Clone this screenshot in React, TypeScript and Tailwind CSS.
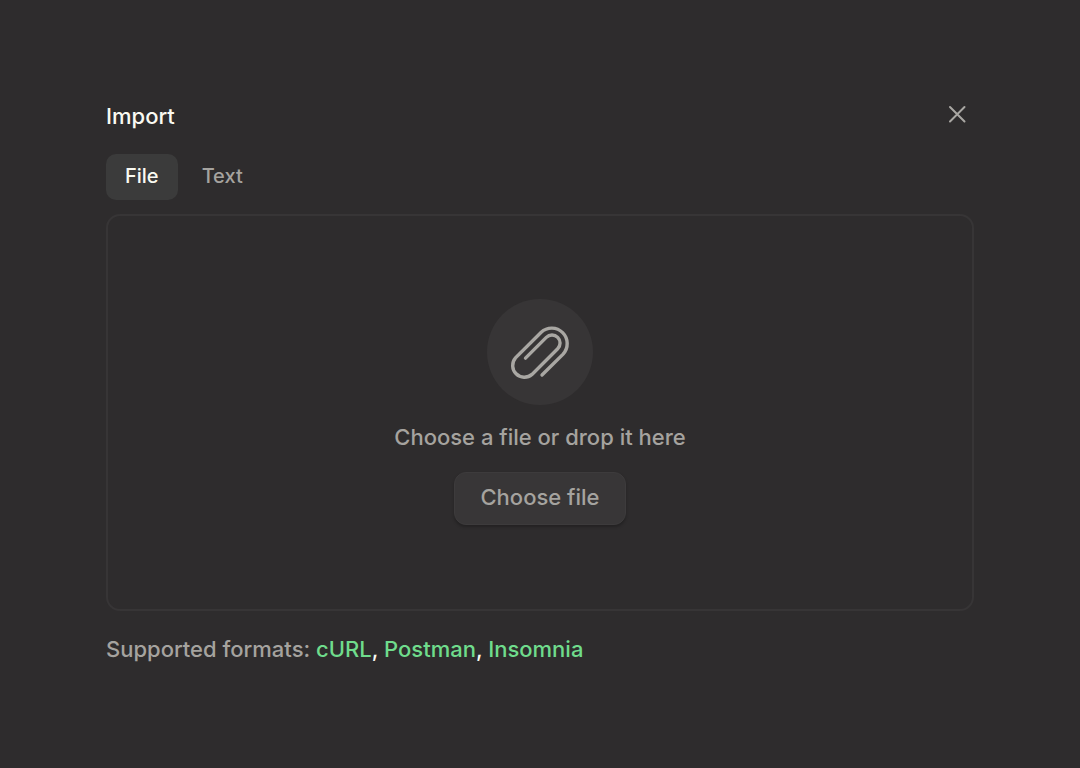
import { useRef, useState } from "react";
import clsx from "clsx";

type Tab = "File" | "Text";

const TABS: Tab[] = ["File", "Text"];
const FORMATS = ["cURL", "Postman", "Insomnia"];

export default function App() {
  const [tab, setTab] = useState<Tab>("File");

  return (
    <main className="min-h-screen bg-[#2e2c2d] px-[106px] pt-[100px] pb-20 font-['Inter',sans-serif] font-medium text-[#a5a39f]">
      <header className="flex h-8 items-start justify-between">
        <h1 className="text-[22px] leading-8 font-medium text-[#fafaf2]">Import</h1>
        <button type="button" aria-label="Close" className="px-2 py-[5px]">
          <CloseIcon />
        </button>
      </header>

      <div role="tablist" className="mt-[22px] flex gap-[5px]">
        {TABS.map((name) => (
          <button
            key={name}
            type="button"
            role="tab"
            aria-selected={tab === name}
            onClick={() => setTab(name)}
            className={clsx(
              "h-[46px] rounded-[10px] px-[19px] pb-[2px] text-[20px]",
              tab === name ? "bg-[#3b3b3b] text-[#fafaf2]" : "text-[#a5a39f]"
            )}
          >
            {name}
          </button>
        ))}
      </div>

      {tab === "File" ? <DropZone /> : <TextImport />}

      <p className="mt-[22px] text-[22px] leading-8">
        Supported formats:{" "}
        {FORMATS.map((format, i) => (
          <span key={format} className="text-[#fafaf2]">
            {i > 0 && ", "}
            <a href="#" className="text-[#6fdc8c]">
              {format}
            </a>
          </span>
        ))}
      </p>
    </main>
  );
}

function DropZone() {
  const input = useRef<HTMLInputElement>(null);

  return (
    <section className="mt-[14px] flex flex-col items-center rounded-[14px] border-2 border-[#373536] pt-[83px] pb-[84px]">
      <div className="flex size-[106px] items-center justify-center rounded-full bg-[#373536]">
        <PaperclipIcon />
      </div>
      <p className="mt-4 text-[22px] leading-8">Choose a file or drop it here</p>
      <input ref={input} type="file" aria-label="File" className="hidden" />
      <button
        type="button"
        onClick={() => input.current?.click()}
        className="mt-[19px] h-[53px] rounded-xl border border-[#3d3b3c] bg-[#383637] px-[25px] pb-[2px] text-[22px] shadow-[0_2px_3px_rgba(0,0,0,0.25)]"
      >
        Choose file
      </button>
    </section>
  );
}

function TextImport() {
  return (
    <textarea
      aria-label="Text"
      className="mt-[14px] block h-[397px] w-full rounded-[14px] border-2 border-[#373536] bg-transparent p-5 text-[20px] outline-none"
    />
  );
}

function CloseIcon() {
  return (
    <svg width="18" height="18" viewBox="0 0 18 18" fill="none" stroke="#a9a7a3" strokeWidth="2" strokeLinecap="round">
      <path d="M2 2 16.5 16.5M16.5 2 2 16.5" />
    </svg>
  );
}

function PaperclipIcon() {
  return (
    <svg width="64" height="64" viewBox="0 0 64 64" fill="none" stroke="#a9a7a3" strokeWidth="3.4" strokeLinecap="round">
      <path d="M17.5 38.1 38.3 17.4A8 8 0 0 1 49.7 28.8L24 54.4A11.7 11.7 0 0 1 7.5 37.9L33.2 12.2A15.5 15.5 0 0 1 55.1 34.1L34 55" />
    </svg>
  );
}
